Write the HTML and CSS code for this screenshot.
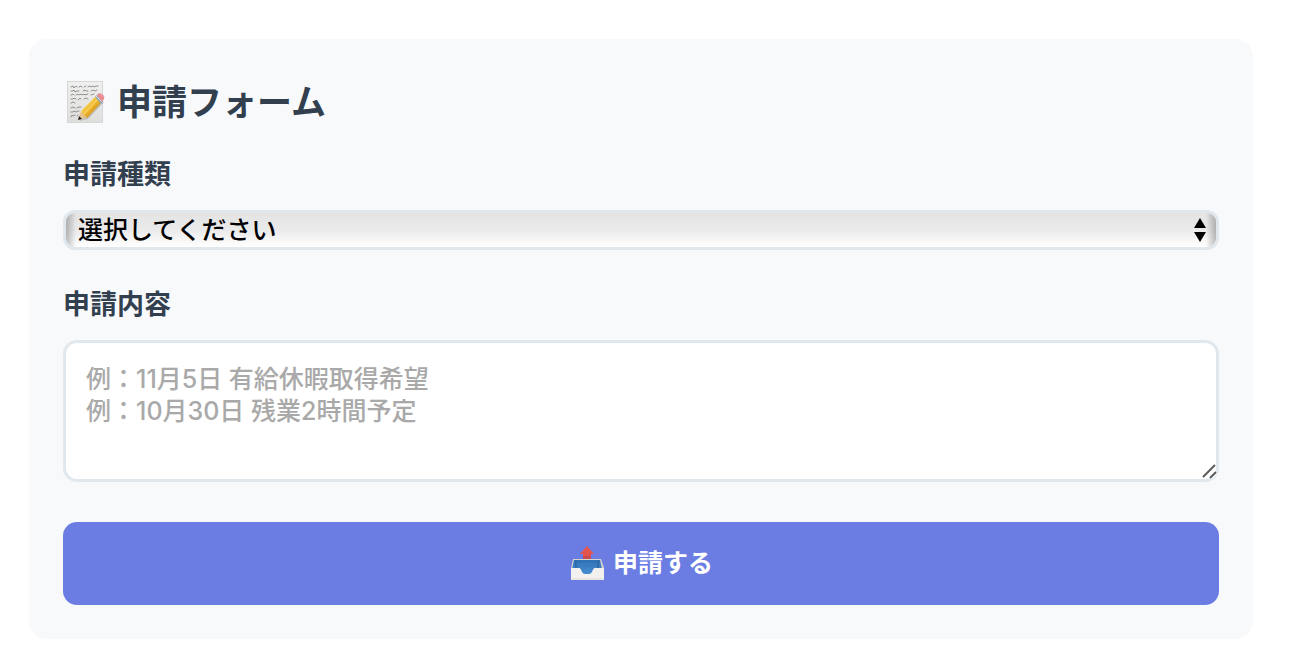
FILE: index.html
```html
<!DOCTYPE html>
<html lang="ja">

<head>
    <meta charset="UTF-8">
    <meta name="viewport" content="width=device-width, initial-scale=1.0">
    <title>申請フォーム</title>
    <link rel="stylesheet" href="styles.css">
</head>

<body>
    <form class="card">
        <h2 class="card-title">
            <svg class="memo-icon" viewBox="0 0 44 44" aria-hidden="true">
                <defs>
                    <linearGradient id="paper" x1="0" y1="0" x2="0" y2="1">
                        <stop offset="0" stop-color="#f0f0ef"/>
                        <stop offset="1" stop-color="#dededd"/>
                    </linearGradient>
                    <linearGradient id="pencil" x1="0" y1="0" x2="1" y2="1">
                        <stop offset="0.25" stop-color="#f9d75c"/>
                        <stop offset="0.5" stop-color="#efb82f"/>
                        <stop offset="0.8" stop-color="#bd7d17"/>
                    </linearGradient>
                </defs>
                <rect x="4.5" y="1.5" width="35" height="41" fill="url(#paper)" stroke="#d5d7d8"/>
                <g fill="none" stroke="#777" stroke-width=".8" stroke-linecap="round">
                    <path d="M8 7l2-1 1 2 2-2 1 1M16 7l2-1 1 1M21 7l2-1M25 7l2-1 1 1 2-1 1 1 2-1 2 0"/>
                    <path d="M8 11l2 0 1-1 1 2 2-1 2 0M20 11l2-1 1 1 2 0M28 11l2-1 2 1 2-1"/>
                    <path d="M8 15l2-1 1 1M13 15l2-1 1 1 2-1 1 1 2-1 1 1 3-1M28 15l3-1"/>
                    <path d="M8 19l2 0 1-1 2 1M15 20l2-2 1 1M21 19l2-1 2 1"/>
                    <path d="M8 23l2-1 2 1"/>
                    <path d="M8 28l2-1 2 1M14 28l2-1 2 0"/>
                    <path d="M8 32l2 0 1-1 2 1 2-1 1 0"/>
                    <path d="M8 37l1-2 1 1 2-1M14 36l1-1"/>
                </g>
                <path d="M16 41l9-2 16-17-2-2-17 17z" fill="#777" opacity=".35"/>
                <path d="M15 40l3-9 7 6z" fill="#e6c38e"/>
                <path d="M15 40l1-4 3 3z" fill="#292622"/>
                <path d="M18 31L33 16l6 6-15 16c-1-2-2-2-3-3-1-2-2-2-3-4z" fill="url(#pencil)"/>
                <path d="M21 34L35 19" stroke="#ffe47a" stroke-width="1"/>
                <path d="M32 17l2-2 6 6-2 3z" fill="#91a6ba"/>
                <path d="M33 16l6 6" stroke="#d9e3e9" stroke-width="1"/>
                <path d="M34 15c1-2 3-2 5-1 2 1 3 3 2 5l-2 3z" fill="#e78d92"/>
                <path d="M36 14c2-1 4 1 4 3" fill="none" stroke="#f3b1b4" stroke-width="1"/>
            </svg>
            申請フォーム
        </h2>

        <label class="field-label" for="request-type">申請種類</label>
        <div class="field select-field">
            <select class="select" id="request-type">
                <option value="">選択してください</option>
            </select>
            <svg class="select-arrows" viewBox="0 0 12 26" aria-hidden="true">
                <path d="M6 1l6 10H0zM0 15h12L6 25z"/>
            </svg>
        </div>

        <label class="field-label" for="request-detail">申請内容</label>
        <div class="field textarea-field">
            <textarea class="textarea" id="request-detail" placeholder="例：11月5日 有給休暇取得希望&#10;例：10月30日 残業2時間予定"></textarea>
            <svg class="resize-grip" viewBox="0 0 16 16" aria-hidden="true">
                <path d="M2 14L14 2M9 15l6-6" fill="none" stroke="#fff" stroke-width="4"/>
                <path d="M2 14L14 2M9 15l6-6" fill="none" stroke="#5c5c5c" stroke-width="2"/>
            </svg>
        </div>

        <button class="submit-button" type="submit">
            <svg class="outbox-icon" viewBox="0 0 36 36" aria-hidden="true">
                <defs>
                    <linearGradient id="tray" x1="0" y1="0" x2="0" y2="1">
                        <stop offset="0" stop-color="#2f70b2"/>
                        <stop offset="1" stop-color="#4c91d8"/>
                    </linearGradient>
                </defs>
                <path d="M4 13h28l3 9v11H2V22z" fill="#d6d5cd"/>
                <path d="M5 14h26l2 9v7H3v-7z" fill="url(#tray)"/>
                <path d="M7 15v9M29 15v9" stroke="#285b91" stroke-width="1"/>
                <path d="M7 18h22" stroke="#3d7fc3" stroke-width="1"/>
                <path d="M18 0l7 8h-3v5h-8V8h-3z" fill="#e3544f"/>
                <path d="M14 10h8v3h-8z" fill="#c84a52"/>
                <path d="M3 22h7c3 0 2 6 6 6h4c4 0 3-6 6-6h8l1 1v10c0 1 0 1-1 1H3c-1 0-1 0-1-1V23z" fill="#f2f1ef"/>
                <path d="M3 33h31" stroke="#dbd8d2" stroke-width="1"/>
            </svg>
            申請する
        </button>
    </form>
</body>

</html>
```

FILE: styles.css
```css
* {
    box-sizing: border-box;
}

body {
    margin: 0;
    padding: 39px 45px 27px 29px;
    background-color: white;
    color: #323f4f;
    font-family: Inter, "Noto Sans CJK JP", sans-serif;
}

.card {
    padding: 34px;
    background-color: #f8f9fb;
    border-radius: 18px;
}

.card-title {
    display: flex;
    align-items: center;
    gap: 10px;
    margin: 0 0 24px;
    font-size: 35px;
    line-height: 58px;
}

.memo-icon {
    width: 44px;
    height: 44px;
}

.field-label {
    display: block;
    margin-bottom: 15px;
    font-size: 27px;
    font-weight: bold;
    line-height: 40px;
}

.field {
    position: relative;
    display: flex;
}

.select,
.textarea {
    width: 100%;
    border: 3px solid #e1e8ed;
    border-radius: 14px;
    font-family: inherit;
    font-size: 25px;
}

.select-field {
    margin-bottom: 35px;
}

.select {
    height: 40px;
    padding: 0 12px;
    appearance: none;
    border-radius: 12px;
    background:
        linear-gradient(to right, rgba(0, 0, 0, 0.25), transparent 10px),
        linear-gradient(to left, rgba(0, 0, 0, 0.25), transparent 10px),
        linear-gradient(#e4e4e4, #eaeaea 50%, #fff);
    color: black;
    font-weight: 500;
}

.select-arrows {
    position: absolute;
    top: 7px;
    right: 13px;
    width: 12px;
    height: 26px;
    pointer-events: none;
}

.textarea-field {
    margin-bottom: 40px;
}

.textarea {
    height: 142px;
    padding: 20px;
    background-color: white;
    color: #323f4f;
    line-height: 32px;
    resize: none;
}

.textarea::placeholder {
    color: #a9a9a9;
    font-weight: 500;
}

.resize-grip {
    position: absolute;
    right: 2px;
    bottom: 3px;
    width: 16px;
    height: 16px;
    pointer-events: none;
}

.submit-button {
    display: flex;
    align-items: center;
    justify-content: center;
    gap: 8px;
    width: 100%;
    padding: 22px;
    border: none;
    border-radius: 14px;
    background-color: #6b7de2;
    color: white;
    font-family: inherit;
    font-size: 25px;
    font-weight: bold;
    line-height: 39px;
    cursor: pointer;
}

.outbox-icon {
    width: 36px;
    height: 36px;
}
```
